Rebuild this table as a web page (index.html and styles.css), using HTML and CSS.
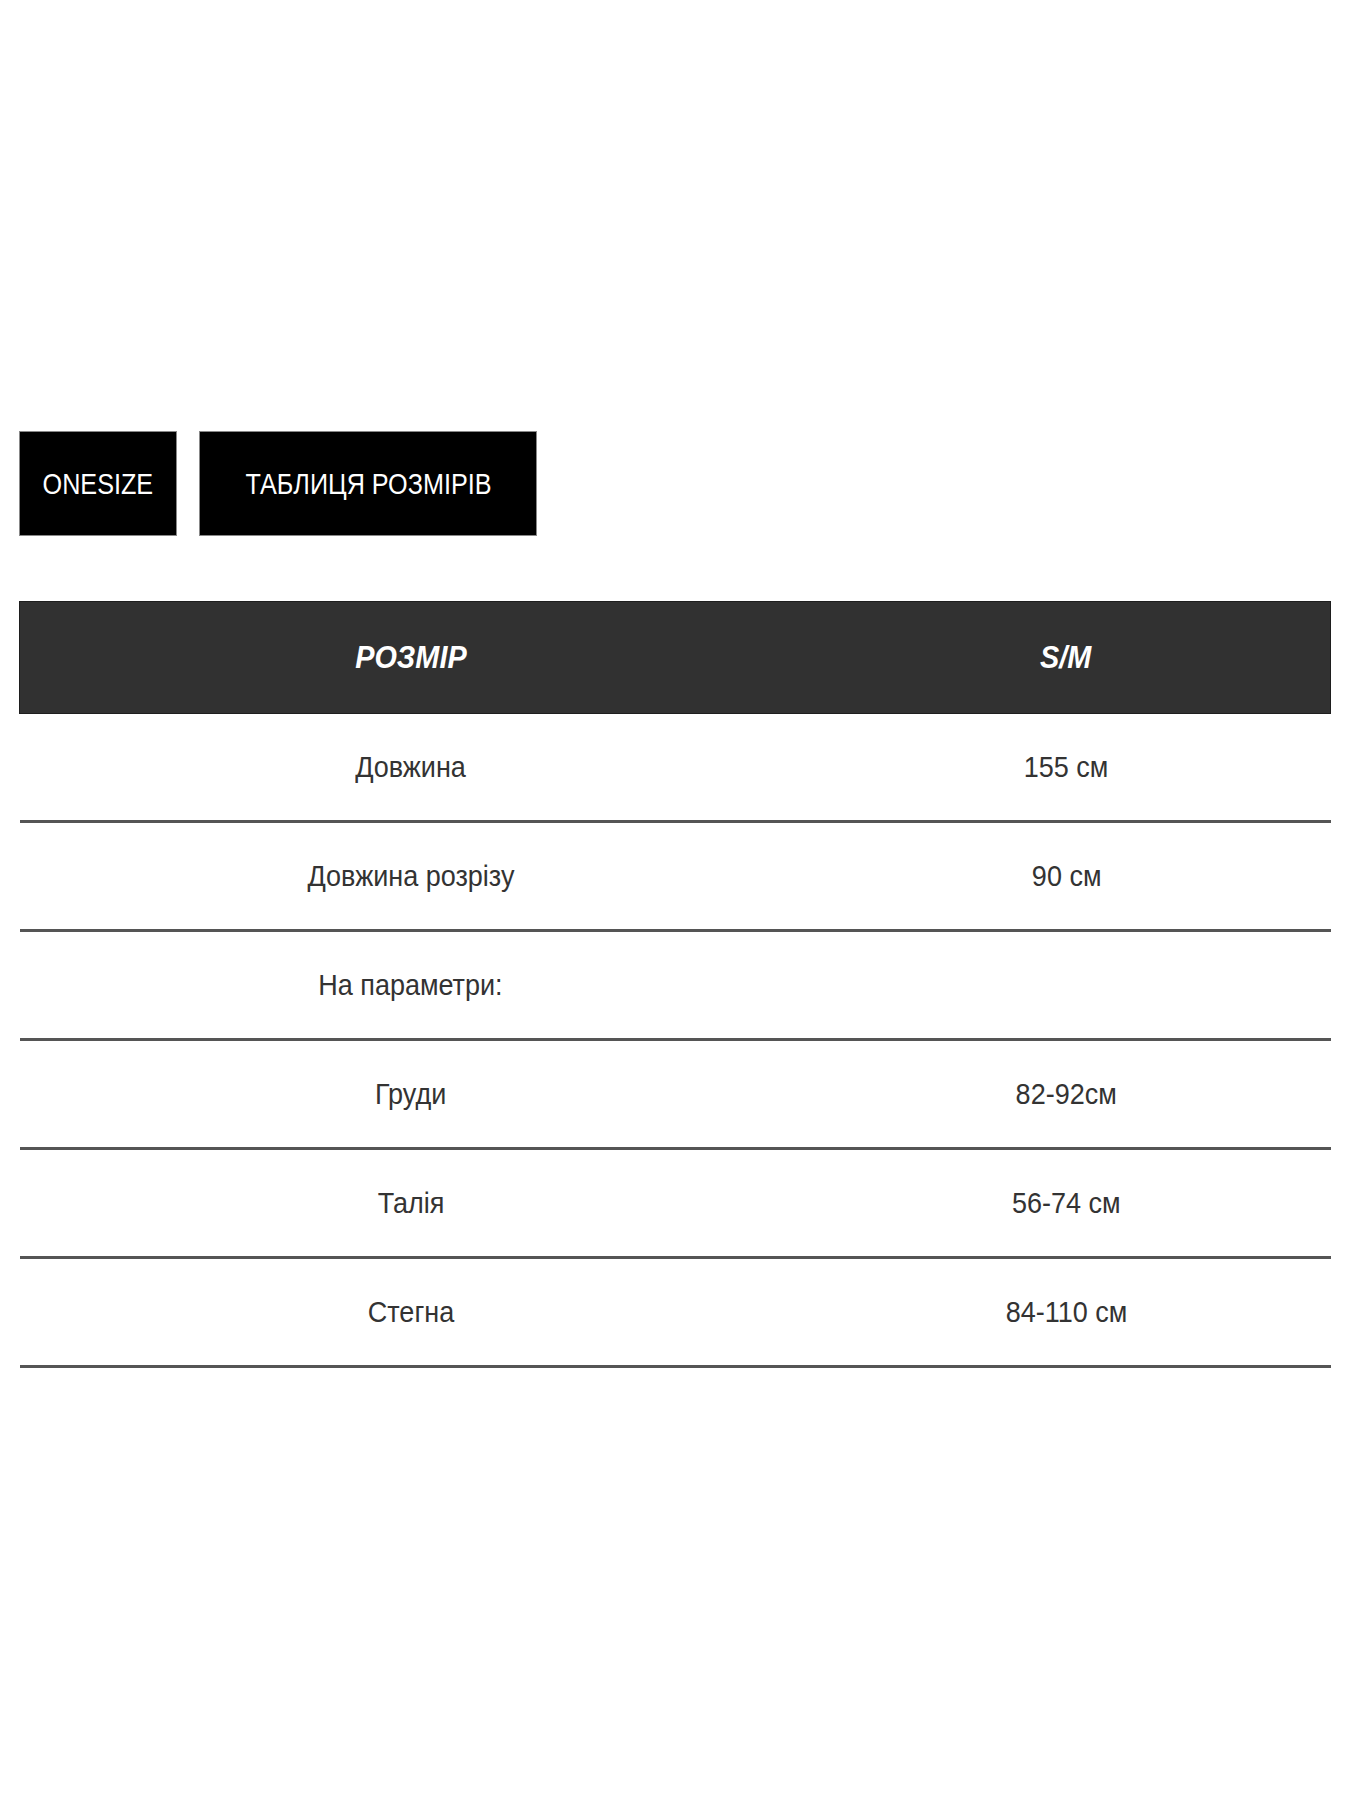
FILE: index.html
```html
<!DOCTYPE html>
<html lang="uk">
<head>
<meta charset="utf-8">
<title>Таблиця розмірів</title>
<link rel="stylesheet" href="styles.css">
</head>
<body>
<div class="page">
  <div class="buttons">
    <div class="btn btn-size"><span class="t">ONESIZE</span></div>
    <div class="btn btn-table"><span class="t">ТАБЛИЦЯ РОЗМІРІВ</span></div>
  </div>
  <table class="sizes">
    <thead>
      <tr><th class="c1"><span class="t">РОЗМІР</span></th><th class="c2"><span class="t">S/M</span></th></tr>
    </thead>
    <tbody>
      <tr><td><span class="t">Довжина</span></td><td><span class="t">155 см</span></td></tr>
      <tr><td><span class="t">Довжина розрізу</span></td><td><span class="t">90 см</span></td></tr>
      <tr><td><span class="t">На параметри:</span></td><td></td></tr>
      <tr><td><span class="t">Груди</span></td><td><span class="t">82-92см</span></td></tr>
      <tr><td><span class="t">Талія</span></td><td><span class="t">56-74 см</span></td></tr>
      <tr><td><span class="t">Стегна</span></td><td><span class="t">84-110 см</span></td></tr>
    </tbody>
  </table>
</div>
</body>
</html>
```
FILE: styles.css
```css
html, body {
  margin: 0;
  padding: 0;
  background: #ffffff;
}
.page {
  padding: 431px 19px 0 19px;
  font-family: "Liberation Sans", Arial, sans-serif;
}
.t {
  display: inline-block;
  transform: scaleX(0.9);
  transform-origin: center;
  white-space: nowrap;
}
.buttons {
  display: flex;
  gap: 22px;
}
.btn {
  height: 105px;
  display: flex;
  align-items: center;
  justify-content: center;
  background: #000;
  color: #fff;
  font-size: 30px;
  box-sizing: border-box;
  border: 1px solid #888;
}
.btn .t { transform: scaleX(0.84); }
.btn-size { width: 158px; }
.btn-table { width: 338px; }
.sizes {
  margin-top: 65px;
  width: 1312px;
  border-collapse: collapse;
  table-layout: fixed;
}
.sizes thead tr {
  background: #313131;
  border: 1px solid #1e1e1e;
}
.sizes th {
  color: #fff;
  font-weight: bold;
  font-style: italic;
  font-size: 31px;
  height: 111px;
  padding: 0;
}
.sizes th .t { transform: scaleX(0.93); }
.sizes .c1 { width: 782px; }
.sizes td {
  height: 106px;
  padding: 0;
  text-align: center;
  color: #333;
  font-size: 30px;
  border-bottom: 3px solid #555;
}
```
